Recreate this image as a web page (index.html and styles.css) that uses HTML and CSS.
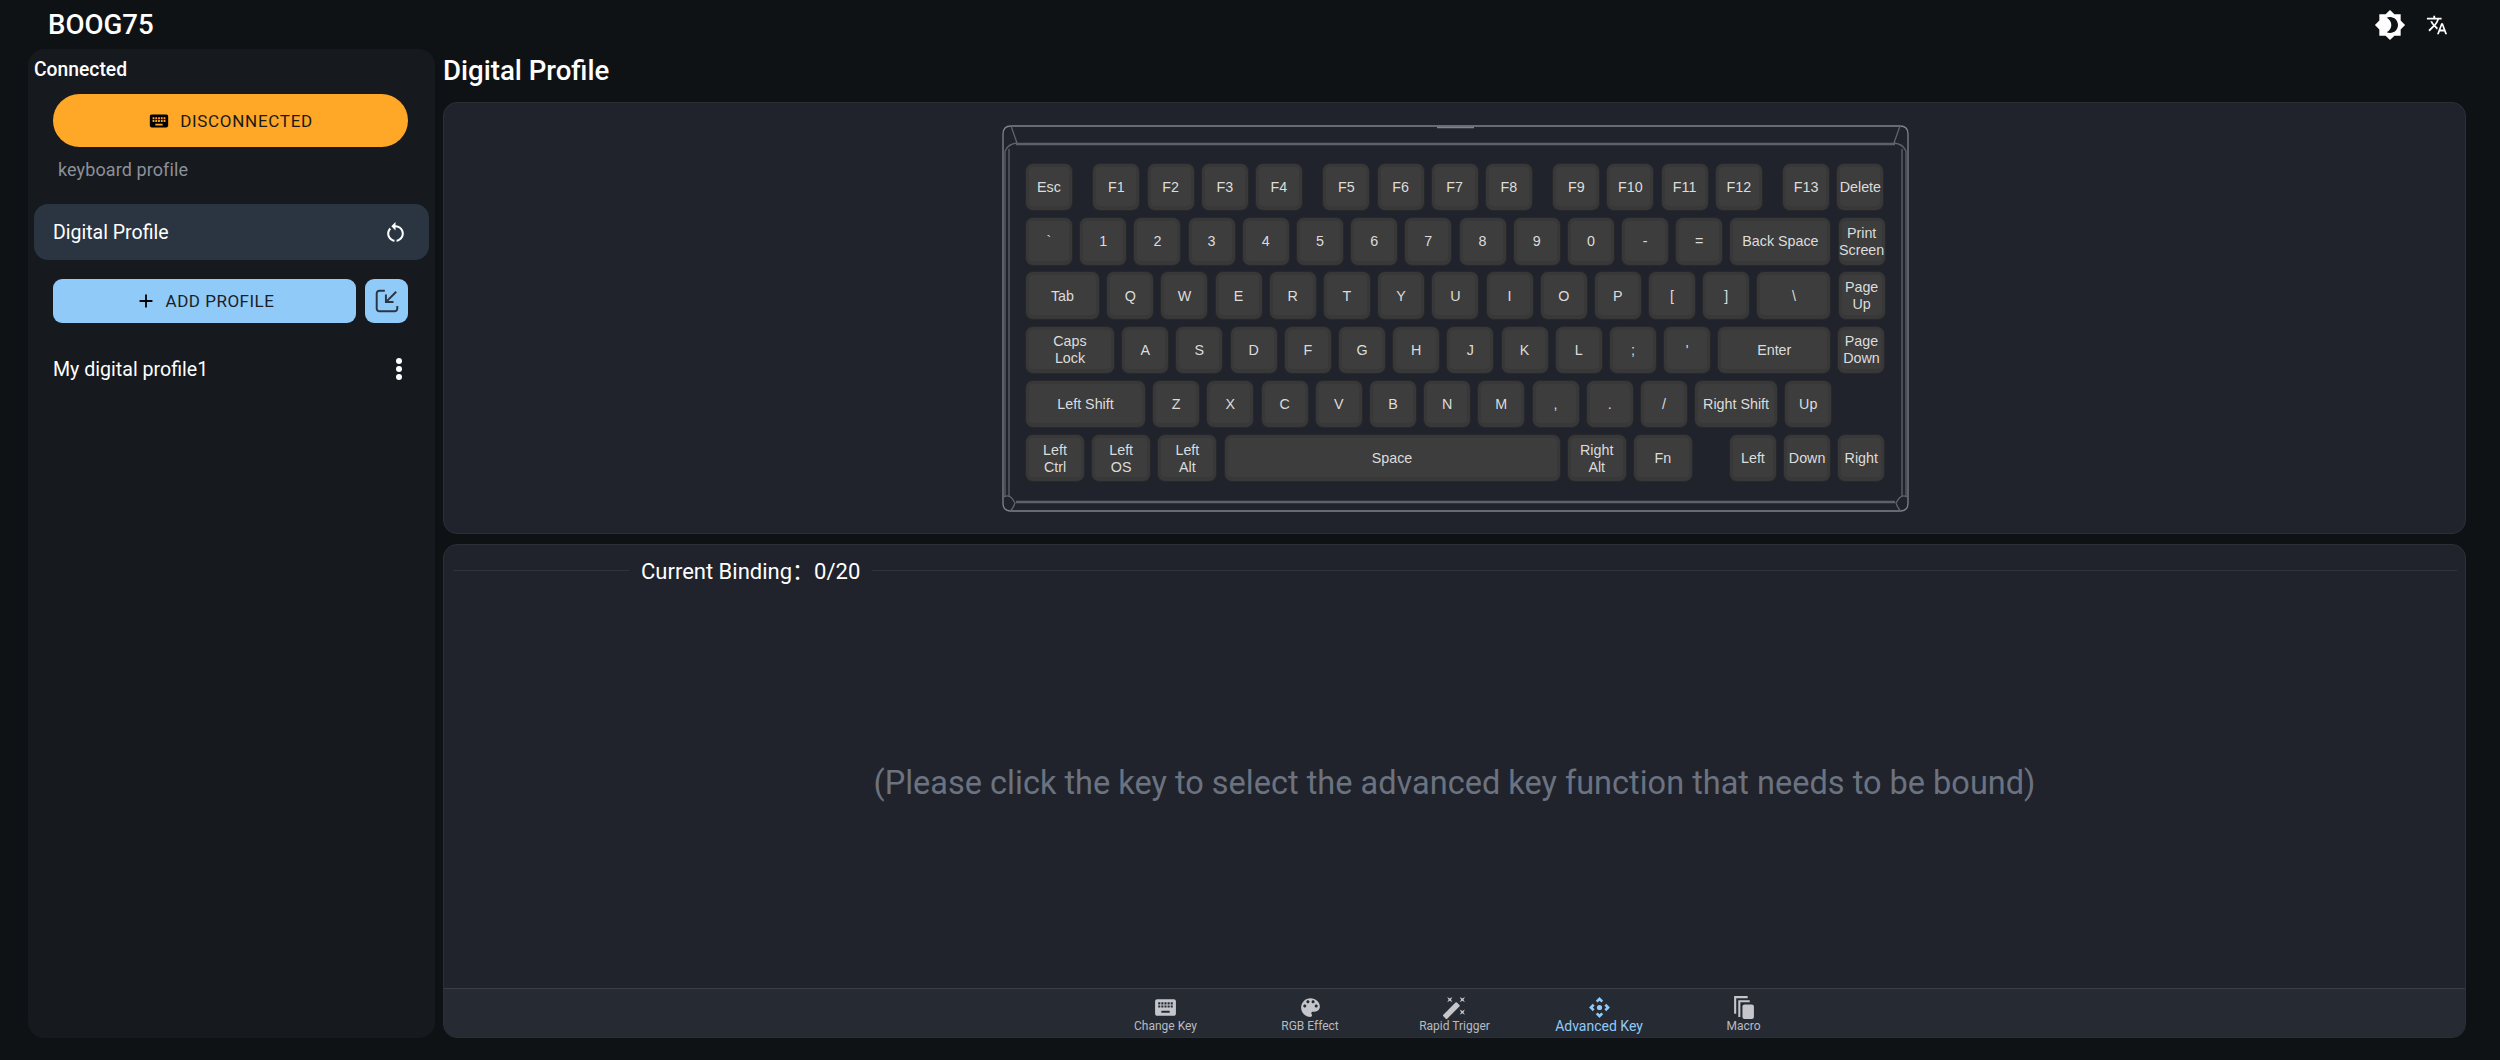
FILE: index.html
```html
<!DOCTYPE html>
<html lang="en">
<head>
    <meta charset="UTF-8">
    <meta name="viewport" content="width=device-width, initial-scale=1.0">
    <title>BOOG75</title>
    <link rel="stylesheet" href="styles.css">
</head>
<body>
    <header class="topbar">
        <span class="brand">BOOG75</span>
        <div class="topbar-actions">
            <svg class="icon-theme" viewBox="0 0 24 24"><path d="M20 8.69V4h-4.69L12 .69 8.69 4H4v4.69L.69 12 4 15.31V20h4.69L12 23.31 15.31 20H20v-4.69L23.31 12 20 8.69zM12 18c-.89 0-1.74-.2-2.5-.55C11.56 16.5 13 14.42 13 12s-1.44-4.5-3.5-5.45C10.26 6.2 11.11 6 12 6c3.31 0 6 2.69 6 6s-2.69 6-6 6z"/></svg>
            <svg class="icon-lang" viewBox="0 0 24 24"><path d="M12.87 15.07l-2.54-2.51.03-.03c1.74-1.94 2.98-4.17 3.71-6.53H17V4h-7V2H8v2H1v1.99h11.17C11.5 7.92 10.44 9.75 9 11.35 8.07 10.32 7.3 9.19 6.69 8h-2c.73 1.63 1.73 3.17 2.98 4.56l-5.09 5.02L4 19l5-5 3.11 3.11.76-2.04zM18.5 10h-2L12 22h2l1.12-3h4.75L21 22h2l-4.5-12zm-2.62 7l1.62-4.33L19.12 17h-3.24z"/></svg>
        </div>
    </header>

    <div class="layout">
        <aside class="sidebar">
            <div class="status">Connected</div>
            <button class="connect-btn">
                <svg viewBox="0 0 24 24"><path d="M20 5H4c-1.1 0-1.99.9-1.99 2L2 17c0 1.1.9 2 2 2h16c1.1 0 2-.9 2-2V7c0-1.1-.9-2-2-2zm-9 3h2v2h-2V8zm0 3h2v2h-2v-2zM8 8h2v2H8V8zm0 3h2v2H8v-2zm-1 2H5v-2h2v2zm0-3H5V8h2v2zm9 7H8v-2h8v2zm0-4h-2v-2h2v2zm0-3h-2V8h2v2zm3 3h-2v-2h2v2zm0-3h-2V8h2v2z"/></svg>
                DISCONNECTED
            </button>
            <div class="section-label">keyboard profile</div>
            <div class="profile-active">
                <span>Digital Profile</span>
                <svg viewBox="0 0 24 24"><path d="M12 5V2L8 6l4 4V7c3.31 0 6 2.69 6 6 0 2.97-2.17 5.43-5 5.91v2.02c3.95-.49 7-3.85 7-7.93 0-4.42-3.58-8-8-8zm-6 8c0-1.65.67-3.15 1.76-4.24L6.34 7.34C4.9 8.79 4 10.79 4 13c0 4.08 3.05 7.44 7 7.93v-2.02c-2.83-.48-5-2.94-5-5.91z"/></svg>
            </div>
            <div class="add-row">
                <button class="add-btn">
                    <svg viewBox="0 0 24 24"><path d="M19 13h-6v6h-2v-6H5v-2h6V5h2v6h6v2z"/></svg>
                    ADD PROFILE
                </button>
                <button class="import-btn">
                    <svg viewBox="0 0 24 24"><path d="M10 2.5H5A2.5 2.5 0 0 0 2.5 5v14A2.5 2.5 0 0 0 5 21.5h14a2.5 2.5 0 0 0 2.5-2.5v-2.5M20.5 3.5 11 13M11 6v7h7"/></svg>
                </button>
            </div>
            <div class="profile-item">
                <span>My digital profile1</span>
                <svg viewBox="0 0 24 24"><circle cx="12" cy="4" r="3"/><circle cx="12" cy="12" r="3"/><circle cx="12" cy="20" r="3"/></svg>
            </div>
        </aside>

        <main class="main">
            <h1 class="page-title">Digital Profile</h1>

            <section class="panel keyboard-panel">
                <div class="keyboard">
                    <svg class="keyboard-frame" viewBox="0 0 907 387">
                        <path class="frame-outer" d="M9 1H898Q906 1 906 9V378Q906 386 898 386H9Q1 386 1 378V9Q1 1 9 1Z"/>
                        <path class="frame-bevel" d="M14 19H893M14 377H893"/>
                        <path class="frame-inner" d="M7 24V372M900 24V372M3 26V372M904 26V372"/>
                        <path class="frame-inner" d="M9 1L15 18Q6 19 3 26M898 1L892 18Q901 19 904 26"/>
                        <path class="frame-inner" d="M2 372Q8 368 13 378Q11 384 8 386M905 372Q899 368 894 378Q896 384 899 386"/>
                        <path class="frame-outer" d="M435 2.5H472"/>
                    </svg>
                    <div class="key-row">
                        <div class="key">Esc</div>
                        <div class="key group">F1</div><div class="key">F2</div><div class="key">F3</div><div class="key">F4</div>
                        <div class="key group">F5</div><div class="key">F6</div><div class="key">F7</div><div class="key">F8</div>
                        <div class="key group">F9</div><div class="key">F10</div><div class="key">F11</div><div class="key">F12</div>
                        <div class="key group">F13</div><div class="key">Delete</div>
                    </div>
                    <div class="key-row">
                        <div class="key">`</div><div class="key">1</div><div class="key">2</div><div class="key">3</div><div class="key">4</div><div class="key">5</div><div class="key">6</div><div class="key">7</div><div class="key">8</div><div class="key">9</div><div class="key">0</div><div class="key">-</div><div class="key">=</div>
                        <div class="key w102">Back Space</div><div class="key">Print<br>Screen</div>
                    </div>
                    <div class="key-row">
                        <div class="key w75">Tab</div>
                        <div class="key">Q</div><div class="key">W</div><div class="key">E</div><div class="key">R</div><div class="key">T</div><div class="key">Y</div><div class="key">U</div><div class="key">I</div><div class="key">O</div><div class="key">P</div><div class="key">[</div><div class="key">]</div>
                        <div class="key w75">\</div><div class="key">Page<br>Up</div>
                    </div>
                    <div class="key-row">
                        <div class="key w90">Caps<br>Lock</div>
                        <div class="key">A</div><div class="key">S</div><div class="key">D</div><div class="key">F</div><div class="key">G</div><div class="key">H</div><div class="key">J</div><div class="key">K</div><div class="key">L</div><div class="key">;</div><div class="key">'</div>
                        <div class="key w114">Enter</div><div class="key">Page<br>Down</div>
                    </div>
                    <div class="key-row">
                        <div class="key w121">Left Shift</div>
                        <div class="key">Z</div><div class="key">X</div><div class="key">C</div><div class="key">V</div><div class="key">B</div><div class="key">N</div><div class="key">M</div><div class="key">,</div><div class="key">.</div><div class="key">/</div>
                        <div class="key w84">Right Shift</div><div class="key">Up</div>
                    </div>
                    <div class="key-row">
                        <div class="key w60">Left<br>Ctrl</div><div class="key w60">Left<br>OS</div><div class="key w60">Left<br>Alt</div>
                        <div class="key w337">Space</div>
                        <div class="key w60">Right<br>Alt</div><div class="key w60">Fn</div>
                        <div class="key arrows">Left</div><div class="key">Down</div><div class="key">Right</div>
                    </div>
                </div>
            </section>

            <section class="panel binding-panel">
                <div class="divider"><span>Current Binding：0/20</span></div>
                <div class="hint">(Please click the key to select the advanced key function that needs to be bound)</div>
                <nav class="tabs">
                    <div class="tab">
                        <svg viewBox="0 0 24 24"><path d="M20 4H4C2.9 4 2 4.9 2 6v12c0 1.1.9 2 2 2h16c1.100 0 2-.9 2-2V6c0-1.100-.9-2-2-2zM8 7h2v2H8V7zm0 3h2v2H8v-2zM5 7h2v2H5V7zm0 3h2v2H5v-2zm11 7H8v-2h8v2zm0-5h-2v-2h2v2zm0-3h-2V7h2v2zm-3 3h-2v-2h2v2zm0-3h-2V7h2v2zm6 3h-2v-2h2v2zm0-3h-2V7h2v2z"/></svg>
                        <span>Change Key</span>
                    </div>
                    <div class="tab">
                        <svg viewBox="0 0 24 24"><path d="M12 3c-4.970 0-9 4.030-9 9s4.030 9 9 9c.830 0 1.500-.670 1.500-1.500 0-.390-.150-.740-.390-1.010-.230-.260-.380-.610-.380-.990 0-.830.670-1.500 1.500-1.500H16c2.760 0 5-2.240 5-5 0-4.420-4.030-8-9-8zm-5.500 9c-.830 0-1.500-.670-1.500-1.500S5.670 9 6.500 9 8 9.670 8 10.500 7.330 12 6.500 12zm3-4C8.670 8 8 7.330 8 6.500S8.670 5 9.500 5s1.500.670 1.500 1.500S10.330 8 9.500 8zm5 0c-.830 0-1.500-.670-1.500-1.500S13.670 5 14.500 5s1.500.670 1.500 1.500S15.330 8 14.500 8zm3 4c-.830 0-1.500-.670-1.500-1.500S16.670 9 17.500 9s1.500.670 1.500 1.500-.670 1.500-1.500 1.500z"/></svg>
                        <span>RGB Effect</span>
                    </div>
                    <div class="tab">
                        <svg viewBox="0 0 24 24"><path d="M7.500 5.600 10 7 8.600 4.500 10 2 7.500 3.400 5 2l1.400 2.500L5 7zm12 9.800L17 14l1.400 2.500L17 19l2.500-1.400L22 19l-1.400-2.500L22 14zM22 2l-2.500 1.400L17 2l1.400 2.500L17 7l2.500-1.400L22 7l-1.400-2.500zm-7.630 5.290a.996.996 0 0 0-1.410 0L1.290 18.960a.996.996 0 0 0 0 1.410l2.340 2.340c.390.390 1.020.390 1.410 0L16.700 11.050a.996.996 0 0 0 0-1.410l-2.330-2.350z"/></svg>
                        <span>Rapid Trigger</span>
                    </div>
                    <div class="tab active">
                        <svg viewBox="0 0 24 24"><path d="M15.540 5.540 13.770 7.300 12 5.540 10.230 7.300 8.460 5.540 12 2l3.540 3.540zm2.920 10-1.760-1.770L18.460 12l-1.760-1.770 1.760-1.770L22 12l-3.540 3.540zm-10 2.920 1.770-1.760L12 18.460l1.770-1.760 1.770 1.760L12 22l-3.540-3.540zm-2.920-10 1.760 1.770L5.540 12l1.760 1.770-1.760 1.770L2 12l3.540-3.540z"/><circle cx="12" cy="12" r="2.500"/></svg>
                        <span>Advanced Key</span>
                    </div>
                    <div class="tab">
                        <svg viewBox="0 0 24 24"><path d="M3 1h13v2H5v15H3zM7 5h11v2H9v14H7z"/><rect x="11" y="9" width="11" height="14" rx="2"/></svg>
                        <span>Macro</span>
                    </div>
                </nav>
            </section>
        </main>
    </div>
</body>
</html>
```

FILE: styles.css
```css
* {
    box-sizing: border-box;
}

body {
    margin: 0;
    height: 1060px;
    overflow: hidden;
    background-color: #0f1215;
    color: #fff;
    font-family: Roboto, "Noto Sans CJK SC", sans-serif;
    display: flex;
    flex-direction: column;
}

.topbar {
    height: 49px;
    flex-shrink: 0;
    padding: 0 52px 0 48px;
    display: flex;
    align-items: center;
    justify-content: space-between;
}

.brand {
    font-size: 27.6px;
    font-weight: 500;
}

.topbar-actions {
    display: flex;
    align-items: center;
    gap: 20px;
    fill: #fff;
}

.icon-theme {
    width: 32px;
    height: 32px;
}

.icon-lang {
    width: 22px;
    height: 22px;
}

.layout {
    flex: 1;
    display: flex;
    gap: 8px;
    padding: 0 34px 22px 28px;
    min-height: 0;
}

/* sidebar */
.sidebar {
    width: 407px;
    flex-shrink: 0;
    background-color: #16191d;
    border-radius: 16px;
    padding: 11px 6px;
}

.status {
    font-size: 19.3px;
    font-weight: 500;
    line-height: 20px;
}

.connect-btn {
    display: flex;
    align-items: center;
    justify-content: center;
    gap: 10px;
    width: 355px;
    height: 53px;
    margin: 14px 0 0 19px;
    border: none;
    border-radius: 27px;
    background-color: #ffa726;
    color: #1a1a1a;
    font-family: inherit;
    font-size: 17px;
    letter-spacing: 0.7px;
}

.connect-btn svg {
    width: 22px;
    height: 22px;
}

.section-label {
    margin: 12px 0 0 24px;
    font-size: 18px;
    line-height: 22px;
    color: #8b9099;
    letter-spacing: 0.1px;
}

.profile-active {
    display: flex;
    align-items: center;
    justify-content: space-between;
    height: 56px;
    margin: 23px 0 0 0;
    padding: 0 21px 0 19px;
    border-radius: 14px;
    background-color: #2a3541;
    font-size: 19.5px;
}

.profile-active svg {
    width: 25px;
    height: 25px;
    fill: #fff;
}

.add-row {
    display: flex;
    gap: 9px;
    margin: 19px 0 0 19px;
}

.add-btn {
    display: flex;
    align-items: center;
    justify-content: center;
    gap: 9px;
    width: 303px;
    height: 44px;
    border: none;
    border-radius: 9px;
    background-color: #90caf9;
    color: #1a1f26;
    font-family: inherit;
    font-size: 17px;
    letter-spacing: 0.5px;
}

.add-btn svg {
    width: 22px;
    height: 22px;
}

.import-btn {
    display: flex;
    align-items: center;
    justify-content: center;
    width: 43px;
    height: 44px;
    padding: 0;
    border: none;
    border-radius: 9px;
    background-color: #90caf9;
}

.import-btn svg {
    width: 26px;
    height: 26px;
    fill: none;
    stroke: #2a3541;
    stroke-width: 1.8;
}

.profile-item {
    display: flex;
    align-items: center;
    justify-content: space-between;
    margin: 31px 0 0 19px;
    padding-right: 18px;
    height: 30px;
    font-size: 19.6px;
}

.profile-item svg {
    width: 24px;
    height: 24px;
    fill: #fff;
}

/* main column */
.main {
    flex: 1;
    display: flex;
    flex-direction: column;
    gap: 10px;
    min-width: 0;
}

.page-title {
    margin: 0;
    height: 43px;
    font-size: 27.6px;
    font-weight: 500;
    line-height: 43px;
}

.panel {
    background-color: #20232b;
    border: 1px solid #2b2f37;
    border-radius: 14px;
}

.keyboard-panel {
    height: 432px;
    flex-shrink: 0;
    display: flex;
    justify-content: center;
    padding-top: 22px;
}

.keyboard {
    position: relative;
    width: 907px;
    height: 387px;
    margin-left: 2px;
    padding: 38px 0 0 23px;
    display: flex;
    flex-direction: column;
    gap: 5.8px;
}

.keyboard-frame {
    position: absolute;
    left: 0;
    top: 0;
    width: 907px;
    height: 387px;
    fill: none;
}

.frame-outer {
    stroke: #7f838d;
    stroke-width: 1.3;
}

.frame-bevel {
    stroke: #5d616b;
    stroke-width: 2.5;
}

.frame-inner {
    stroke: #5f636d;
    stroke-width: 1.3;
}

.key-row {
    position: relative;
    display: flex;
    gap: 6.2px;
    height: 48.4px;
}

.key {
    width: 48px;
    flex-shrink: 0;
    display: flex;
    align-items: center;
    justify-content: center;
    text-align: center;
    padding-top: 1px;
    border: 1px solid #26282c;
    border-radius: 8px;
    background-color: #3d3d3d;
    box-shadow: inset 0 0 0 3px #383838, inset 0 -4px 0 0 #383838;
    color: #dcdcdc;
    font-family: "Liberation Sans", Arial, sans-serif;
    font-size: 14.3px;
    line-height: 17px;
    white-space: nowrap;
}

.key.group {
    margin-left: 13.2px;
}

.key.arrows {
    margin-left: 29.8px;
}

.w60 { width: 60px; }
.w75 { width: 75px; }
.w84 { width: 84px; }
.w90 { width: 90px; }
.w102 { width: 102px; }
.w114 { width: 114px; }
.w121 { width: 121px; }
.w337 { width: 337px; }

/* binding panel */
.binding-panel {
    flex: 1;
    display: flex;
    flex-direction: column;
    min-height: 0;
    overflow: hidden;
}

.divider {
    display: flex;
    align-items: center;
    gap: 12px;
    height: 26px;
    margin: 12px 8px 0 9px;
    font-size: 22px;
}

.divider span {
    margin-bottom: 2px;
}

.divider::before {
    content: "";
    width: 176px;
    border-top: 1px solid #2f333b;
}

.divider::after {
    content: "";
    flex: 1;
    border-top: 1px solid #2f333b;
}

.hint {
    flex: 1;
    display: flex;
    align-items: center;
    justify-content: center;
    padding-bottom: 5px;
    color: #6b7280;
    font-size: 32.5px;
}

.tabs {
    height: 49px;
    flex-shrink: 0;
    display: flex;
    justify-content: center;
    background-color: #262a33;
    border-top: 1px solid #393d45;
}

.tab {
    width: 144.500px;
    display: flex;
    flex-direction: column;
    align-items: center;
    padding-top: 6px;
    color: #b8bbc1;
    fill: #c4c6cb;
    font-size: 12px;
    line-height: 15px;
}

.tab svg {
    width: 25px;
    height: 25px;
    margin-bottom: -1px;
}

.tab.active {
    color: #90caf9;
    fill: #90caf9;
    font-size: 14px;
}
```
